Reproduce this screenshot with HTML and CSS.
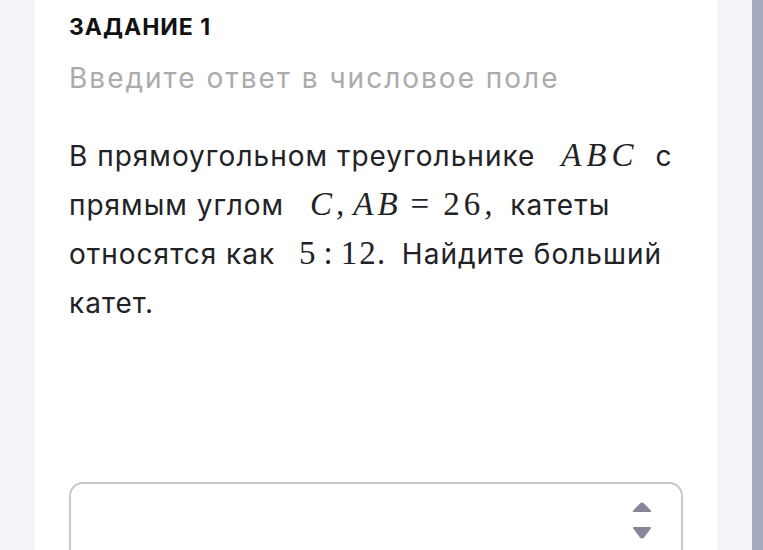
FILE: index.html
```html
<!DOCTYPE html>
<html lang="ru">
<head>
<meta charset="utf-8">
<link rel="stylesheet" href="styles.css">
</head>
<body>
<div class="page">
  <div class="gutter-left"></div>
  <main class="card">
    <h1 class="title">ЗАДАНИЕ 1</h1>
    <p class="hint">Введите ответ в числовое поле</p>
    <p class="task">В прямоугольном треугольнике <span class="m m-wide">ABC</span> с прямым углом <span class="m">C,<span class="sp"></span>AB<span class="op">=</span><span class="n">26</span>,</span> катеты относятся как <span class="m m-ratio"><span class="n">5</span><span class="op">:</span><span class="n">12</span>.</span> Найдите больший катет.</p>
    <div class="answer">
      <div class="spin">
        <svg width="20" height="38" viewBox="0 0 20 38">
          <path d="M10 0.5 Q11.2 0.5 12 1.5 L18.8 8.4 Q20 10 18 10 L2 10 Q0 10 1.2 8.4 L8 1.5 Q8.8 0.5 10 0.5Z" fill="#878599"/>
          <path d="M2 25 L18 25 Q20 25 18.8 26.6 L12 35.5 Q11.2 36.6 10 36.6 Q8.8 36.6 8 35.5 L1.2 26.6 Q0 25 2 25Z" fill="#878599"/>
        </svg>
      </div>
    </div>
  </main>
  <div class="gutter-right"></div>
  <div class="scrollbar"></div>
</div>
</body>
</html>
```
FILE: styles.css
```css
html, body {
  margin: 0;
  padding: 0;
  height: 100%;
  overflow: hidden;
}
body {
  font-family: Inter, "Noto Sans", sans-serif;
  background: #f4f4f8;
}
.page {
  display: flex;
  height: 550px;
}
.gutter-left {
  width: 34px;
  background: #f4f4f8;
}
.card {
  width: 684px;
  background: #ffffff;
  padding: 13px 35px 0 35px;
  box-sizing: border-box;
}
.gutter-right {
  width: 34px;
  background: #f4f4f8;
}
.scrollbar {
  width: 11px;
  background: #a6aabf;
}
.title {
  margin: 0;
  font-size: 23px;
  font-weight: 700;
  line-height: 28px;
  color: #111114;
  letter-spacing: 1px;
}
.hint {
  margin: 20px 0 0 0;
  font-size: 28px;
  line-height: 34px;
  color: #ababab;
  font-weight: 400;
  letter-spacing: 2px;
}
.task {
  margin: 37px 0 0 0;
  font-size: 28px;
  line-height: 49px;
  color: #222226;
  font-weight: 400;
  letter-spacing: 1px;
}
.m {
  font-family: "Liberation Serif", "DejaVu Serif", serif;
  font-style: italic;
  font-size: 33px;
  line-height: 0;
  margin: 0 5px 0 17px;
  letter-spacing: 4px;
  color: #222226;
}
.m-wide {
  letter-spacing: 5px;
  margin-right: 8px;
}
.m-ratio {
  letter-spacing: 2px;
  margin-left: 15px;
}
.m .n {
  font-style: normal;
}
.m .op {
  font-style: normal;
  margin: 0 10px 0 9px;
}
.m-ratio .op {
  margin: 0 6px 0 6px;
}
.m .sp {
  display: inline-block;
  width: 5px;
}
.answer {
  margin-top: 154px;
  height: 90px;
  border: 2px solid #c8c8c8;
  border-radius: 14px;
  display: flex;
  justify-content: flex-end;
  padding: 18px 29px 0 0;
  box-sizing: border-box;
}
.spin {
  width: 20px;
  height: 38px;
}
```
